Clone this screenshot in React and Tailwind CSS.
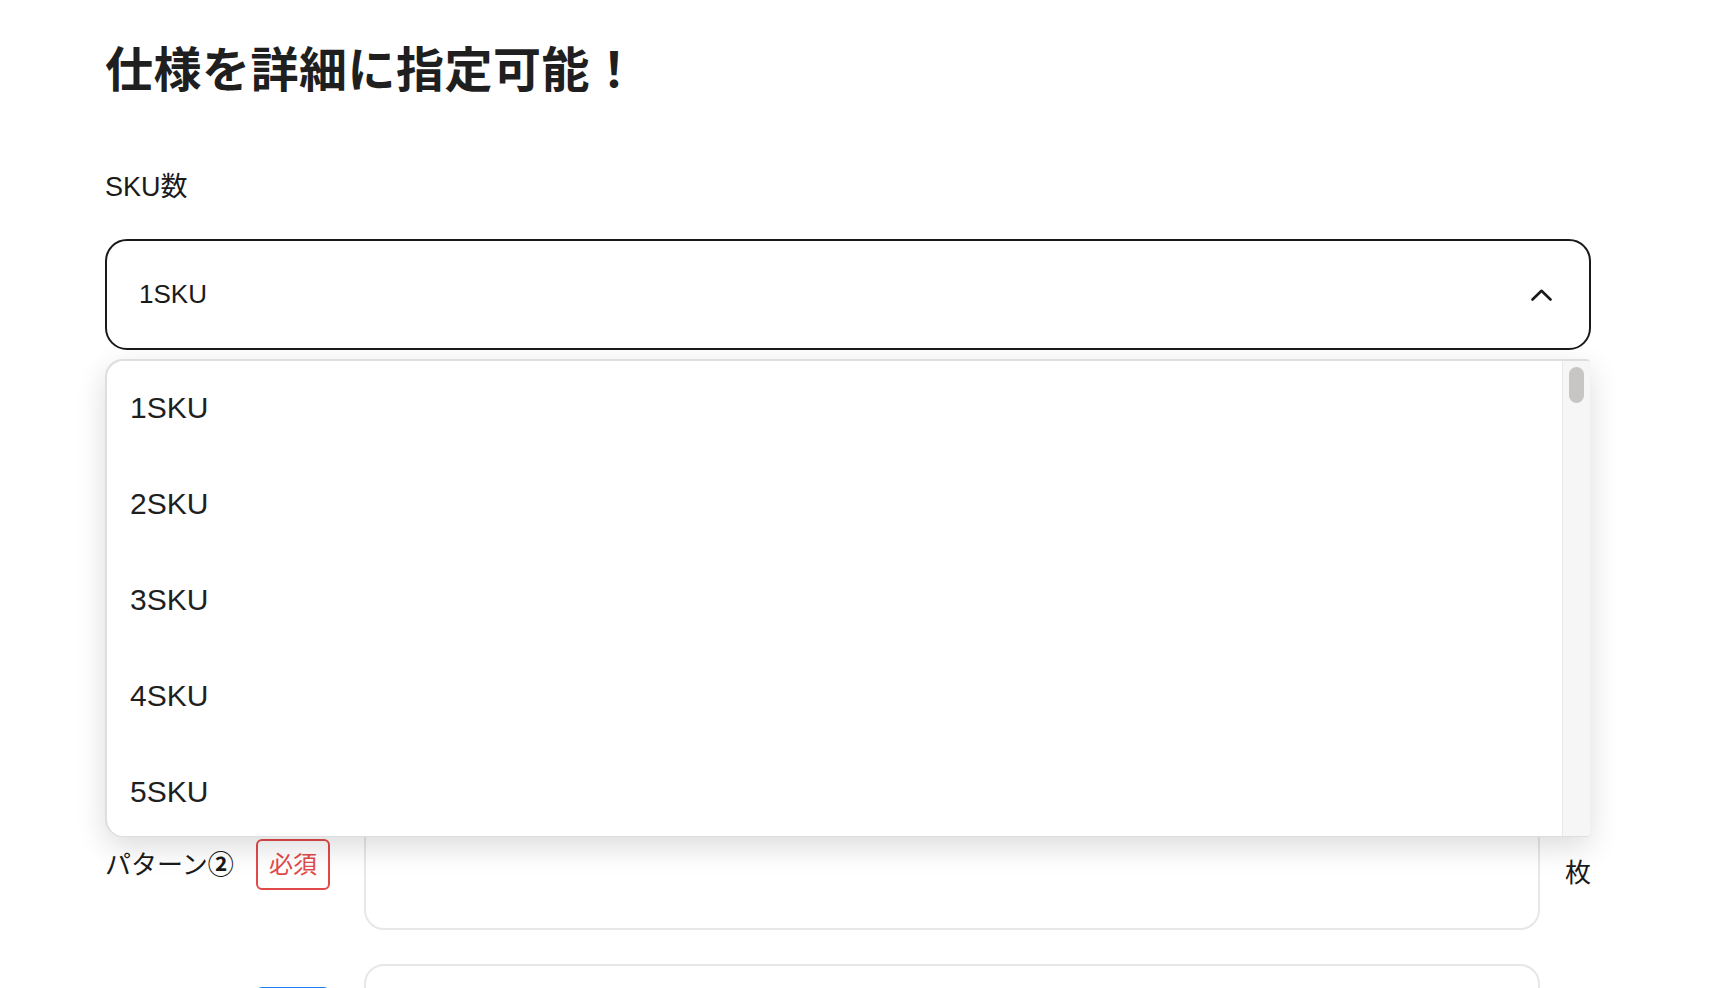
import React from "react";

const font = { fontFamily: '"Liberation Sans", "Noto Sans CJK JP", sans-serif' };

const options = ["1SKU", "2SKU", "3SKU", "4SKU", "5SKU", "6SKU", "7SKU"];

const rows = [
  { label: "パターン②", badge: "必須", color: "red", unit: "枚" },
  { label: "備考", badge: "任意", color: "blue", unit: "" },
];

const Badge = ({ text, color }) => (
  <span
    className={
      color === "red"
        ? "flex h-[51px] w-[74px] items-center justify-center rounded-[6px] border-2 border-[#e24a4a] text-[24px] leading-none text-[#e24a4a]"
        : "flex h-[51px] w-[74px] items-center justify-center rounded-[6px] border-2 border-[#1a7cf0] bg-[#1a7cf0] text-[24px] leading-none text-white"
    }
  >
    {text}
  </span>
);

const FormRow = ({ label, badge, color, unit, top }) => (
  <div className="flex items-start">
    <div className="mr-[34px] flex w-[225px] shrink-0 items-center justify-between" style={{ paddingTop: top }}>
      <span className="text-[26px] leading-none text-[#1a1a1a]">
        {label.replace("②", "")}
        {label.includes("②") && <span className="font-bold">②</span>}
      </span>
      <Badge text={badge} color={color} />
    </div>
    <div className="h-[110px] flex-1 rounded-[20px] border-2 border-[#e7e7ea] bg-white" />
    <span className="ml-[25px] mt-[40px] w-[26px] text-[26px] leading-none text-[#1a1a1a]">{unit}</span>
  </div>
);

export default function App() {
  return (
    <div className="min-h-screen bg-white pl-[105px] text-[#1a1a1a]" style={font}>
      <div className="w-[1486px]">
        <h1 className="pt-[47px] text-[48px] font-bold leading-[48px] tracking-[0.5px] text-[#1f1f1f]">
          仕様を詳細に指定可能！
        </h1>

        <p className="mt-[79px] text-[27px] leading-[26px]">SKU数</p>

        <div className="relative z-10 mt-[39px]">
          <button className="flex h-[111px] w-full items-center justify-between rounded-[22px] border-2 border-[#1a1a1a] bg-white pl-[32px] pr-[37px] text-[26px] text-[#1a1a1a]">
            <span>1SKU</span>
            <svg width="21" height="12" viewBox="0 0 21 12" fill="none">
              <polyline
                points="1.5,10.5 10.5,1.8 19.5,10.5"
                stroke="#1a1a1a"
                strokeWidth="2.6"
                strokeLinecap="round"
                strokeLinejoin="round"
              />
            </svg>
          </button>

          <div className="absolute left-0 right-[1px] top-[120px] flex h-[478px] overflow-hidden rounded-l-[18px] rounded-r-[4px] border-t-2 border-l-2 border-b border-[#dedede] bg-white shadow-[0_10px_30px_rgba(0,0,0,0.14)]">
            <ul className="-mt-[2px] flex-1 overflow-hidden">
              {options.map((o) => (
                <li
                  key={o}
                  className="flex h-[96px] shrink-0 items-center pl-[23px] text-[30px] text-[#1f1f1f]"
                >
                  {o}
                </li>
              ))}
            </ul>
            <div className="flex w-[28px] shrink-0 justify-center border-l border-[#e9e9e9] bg-[#f6f6f6] pt-[6px]">
              <div className="h-[36px] w-[15px] rounded-full bg-[#c8c5c5]" />
            </div>
          </div>
        </div>

        <div className="mt-[470px] flex flex-col gap-[34px]">
          {rows.map((r, i) => (
            <FormRow key={r.label} {...r} top={i === 0 ? 19 : 23} />
          ))}
        </div>
      </div>
    </div>
  );
}
